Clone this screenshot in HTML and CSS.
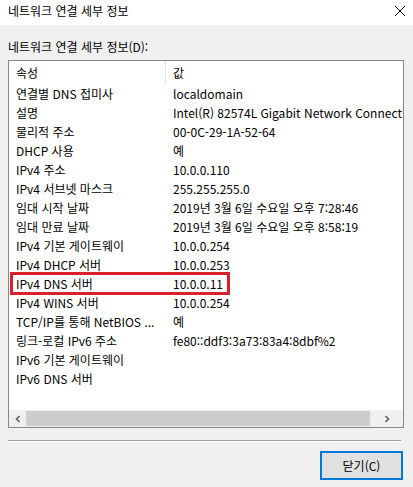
FILE: index.html
```html
<!DOCTYPE html>
<html lang="ko">
<head>
<meta charset="utf-8">
<title>네트워크 연결 세부 정보</title>
<link rel="stylesheet" href="styles.css">
</head>
<body>
<div class="dialog">
  <div class="titlebar">
    <span class="title">네트워크 연결 세부 정보</span>
    <svg class="close" width="12" height="12" viewBox="0 0 12 12"><path d="M1 1 L11 11 M11 1 L1 11" stroke="#000" stroke-width="1" fill="none"/></svg>
  </div>
  <div class="body">
    <div class="label">네트워크 연결 세부 정보(D):</div>
    <div class="listbox">
      <div class="header">
        <div class="c1 hcell">속성</div>
        <div class="c2">값</div>
      </div>
      <div class="rows">
        <div class="row"><div class="c1">연결별 DNS 접미사</div><div class="c2">localdomain</div></div>
        <div class="row"><div class="c1">설명</div><div class="c2 clip">Intel(R) 82574L Gigabit Network Connection</div></div>
        <div class="row"><div class="c1">물리적 주소</div><div class="c2">00-0C-29-1A-52-64</div></div>
        <div class="row"><div class="c1">DHCP 사용</div><div class="c2">예</div></div>
        <div class="row"><div class="c1">IPv4 주소</div><div class="c2">10.0.0.110</div></div>
        <div class="row"><div class="c1">IPv4 서브넷 마스크</div><div class="c2">255.255.255.0</div></div>
        <div class="row"><div class="c1">임대 시작 날짜</div><div class="c2">2019년 3월 6일 수요일 오후 7:28:46</div></div>
        <div class="row"><div class="c1">임대 만료 날짜</div><div class="c2">2019년 3월 6일 수요일 오후 8:58:19</div></div>
        <div class="row"><div class="c1">IPv4 기본 게이트웨이</div><div class="c2">10.0.0.254</div></div>
        <div class="row"><div class="c1">IPv4 DHCP 서버</div><div class="c2">10.0.0.253</div></div>
        <div class="row"><div class="c1">IPv4 DNS 서버</div><div class="c2">10.0.0.11</div><div class="mark"></div></div>
        <div class="row"><div class="c1">IPv4 WINS 서버</div><div class="c2">10.0.0.254</div></div>
        <div class="row"><div class="c1">TCP/IP를 통해 NetBIOS ...</div><div class="c2">예</div></div>
        <div class="row"><div class="c1">링크-로컬 IPv6 주소</div><div class="c2">fe80::ddf3:3a73:83a4:8dbf%2</div></div>
        <div class="row"><div class="c1">IPv6 기본 게이트웨이</div><div class="c2"></div></div>
        <div class="row"><div class="c1">IPv6 DNS 서버</div><div class="c2"></div></div>
      </div>
      <div class="spacer"></div>
      <div class="hscroll">
        <div class="arrow"><svg width="8" height="8" viewBox="0 0 8 8"><path d="M5.5 1 L2.5 4 L5.5 7" stroke="#606060" stroke-width="1.6" fill="none"/></svg></div>
        <div class="thumb"></div>
        <div class="arrow right"><svg width="8" height="8" viewBox="0 0 8 8"><path d="M2.5 1 L5.5 4 L2.5 7" stroke="#606060" stroke-width="1.6" fill="none"/></svg></div>
      </div>
    </div>
    <div class="separator"></div>
    <div class="footer">
      <button class="btn">닫기(C)</button>
    </div>
  </div>
</div>
</body>
</html>
```

FILE: styles.css
```css
* { box-sizing: border-box; }
html, body {
  margin: 0;
  padding: 0;
}
body {
  width: 413px;
  height: 487px;
  background: #f0f0f0;
  font-family: "Noto Sans CJK KR", "Noto Sans", sans-serif;
  font-size: 12px;
  color: #000;
  overflow: hidden;
}
.titlebar {
  height: 25px;
  background: #fff;
  display: flex;
  align-items: center;
  justify-content: space-between;
  padding: 0 7px 3px 8px;
}
.title {
  font-size: 12px;
  line-height: 16px;
}
.close {
  display: block;
}
.body {
  padding: 0 9px 0 8px;
}
.label {
  height: 35px;
  padding-top: 14px;
  line-height: 16px;
}
.listbox {
  height: 368px;
  border: 1px solid #828790;
  background: #fff;
  display: flex;
  flex-direction: column;
  overflow: hidden;
}
.header {
  height: 23px;
  display: flex;
  align-items: center;
  flex: none;
}
.row {
  height: 19px;
  display: flex;
  align-items: center;
  position: relative;
}
.c1 {
  width: 157px;
  flex: none;
  padding-left: 7px;
  white-space: nowrap;
  overflow: hidden;
  line-height: 16px;
}
.hcell {
  height: 23px;
  display: flex;
  align-items: center;
  border-right: 1px solid #e5e5e5;
}
.c2 {
  padding-left: 7px;
  white-space: nowrap;
  line-height: 16px;
}
.c2.clip {
  flex: 1;
  min-width: 0;
  overflow: hidden;
}
.rows { flex: none; }
.spacer { flex: 1; }
.hscroll {
  height: 17px;
  flex: none;
  display: flex;
  background: #f0f0f0;
}
.arrow {
  width: 17px;
  height: 17px;
  display: flex;
  align-items: center;
  justify-content: center;
  flex: none;
}
.thumb {
  flex: 1;
  margin: 1px 0;
  background: #cdcdcd;
}
.arrow.right { width: 33px; }
.mark {
  position: absolute;
  left: 1px;
  top: -2px;
  width: 220px;
  height: 23px;
  border: 3px solid #d8212b;
}
.separator {
  margin-top: 12px;
  height: 2px;
  border-top: 1px solid #a0a0a0;
  border-bottom: 1px solid #fff;
  margin-right: 3px;
}
.footer {
  display: flex;
  justify-content: flex-end;
  padding-top: 9px;
}
.btn {
  width: 83px;
  height: 29px;
  border: 2px solid #0078d7;
  background: #e1e1e1;
  font-family: inherit;
  font-size: 12px;
  color: #000;
  padding: 0;
  margin-right: 1px;
}
```
